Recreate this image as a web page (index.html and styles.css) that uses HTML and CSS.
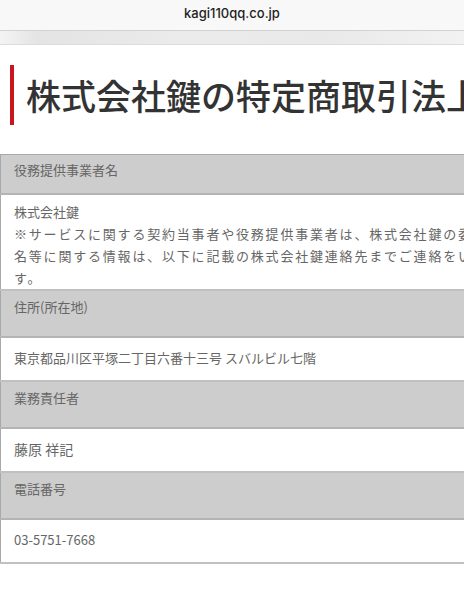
FILE: index.html
```
<!DOCTYPE html>
<html lang="ja">
<head>
	<meta charset="utf-8">
	<meta name="viewport" content="width=device-width, initial-scale=1.0">
	<title>株式会社鍵の特定商取引法上の表記</title>
	<link rel="stylesheet" href="styles.css">
</head>
<body>

	<!--Address bar shown above the page.-->
	<div class="addressBar">
		<span class="siteUrl">kagi110qq.co.jp</span>
	</div>
	<div class="tabStrip"></div>

	<div id="container">
		<h1 class="pageTitle">株式会社鍵の特定商取引法上の表記</h1>

		<table class="lawTable">
			<tr><th class="firstHead">役務提供事業者名</th></tr>
			<tr>
				<td class="firstCell">
					株式会社鍵<br>
					<span class="note">※サービスに関する契約当事者や役務提供事業者は、株式会社鍵の委託を受けた各加盟店となります。店舗<br>名等に関する情報は、以下に記載の株式会社鍵連絡先までご連絡をいただけますようお願いいたしま<br>す。</span>
				</td>
			</tr>
			<tr><th>住所(所在地)</th></tr>
			<tr><td>東京都品川区平塚二丁目六番十三号 スバルビル七階</td></tr>
			<tr><th>業務責任者</th></tr>
			<tr><td class="bigger">藤原 祥記</td></tr>
			<tr><th>電話番号</th></tr>
			<tr><td>03-5751-7668</td></tr>
		</table>
	</div><!-- closes main div-->

</body>
</html>
```

FILE: styles.css
```
body
{
	margin: 0;
	background: #fff;
	overflow-x: hidden;
	font-family: "Noto Sans CJK JP", "Noto Sans", sans-serif;
	-webkit-text-size-adjust: 100%;
}

.addressBar
{
	height: 30px;
	background: #f8f8f8;
	border-bottom: 1px solid #d2d2d2;
	display: flex;
	align-items: center;
	justify-content: center;
}

.siteUrl
{
	font-family: Inter, "Noto Sans", sans-serif;
	font-size: 13px;
	font-weight: 500;
	color: #1e1e1e;
	margin-top: -4px;
}

.tabStrip
{
	height: 13px;
	background: linear-gradient(to right, #f4f4f4 0%, #e4e4e4 8%, #ebebeb 40%, #e9e9e9 70%, #f2f2f2 100%);
	border-bottom: 1px solid #dcdcdc;
}

#container
{
	width: 820px;
}

.pageTitle
{
	margin: 20px 0 0 10px;
	padding-left: 12px;
	border-left: 4px solid #c8161d;
	font-size: 35px;
	font-weight: 500;
	line-height: 60px;
	color: #333;
	white-space: nowrap;
}

.lawTable
{
	margin-top: 29px;
	width: 100%;
	border-collapse: collapse;
	border-top: 1px solid #e2e2e2;
	font-size: 13px;
	color: #666;
}

.lawTable th
{
	background: #cdcdcd;
	text-align: left;
	font-weight: normal;
	height: 45px;
	box-sizing: border-box;
	padding: 6px 13px 19px;
	line-height: 20px;
	vertical-align: top;
	border: 1px solid #a9a9a9;
	border-bottom: 2px solid #b4b4b4;
}

.lawTable th.firstHead
{
	height: 39px;
	padding-bottom: 13px;
	padding-top: 5px;
}

.lawTable td
{
	background: #fff;
	padding: 9px 13px 11px;
	line-height: 22px;
	border: 1px solid #a9a9a9;
	border-bottom: 2px solid #c0c0c0;
}

.lawTable td.firstCell
{
	padding: 6px 13px 0;
	line-height: 22px;
}

.note
{
	letter-spacing: 1.8px;
	white-space: nowrap;
}

.bigger
{
	font-size: 14px;
}
```
